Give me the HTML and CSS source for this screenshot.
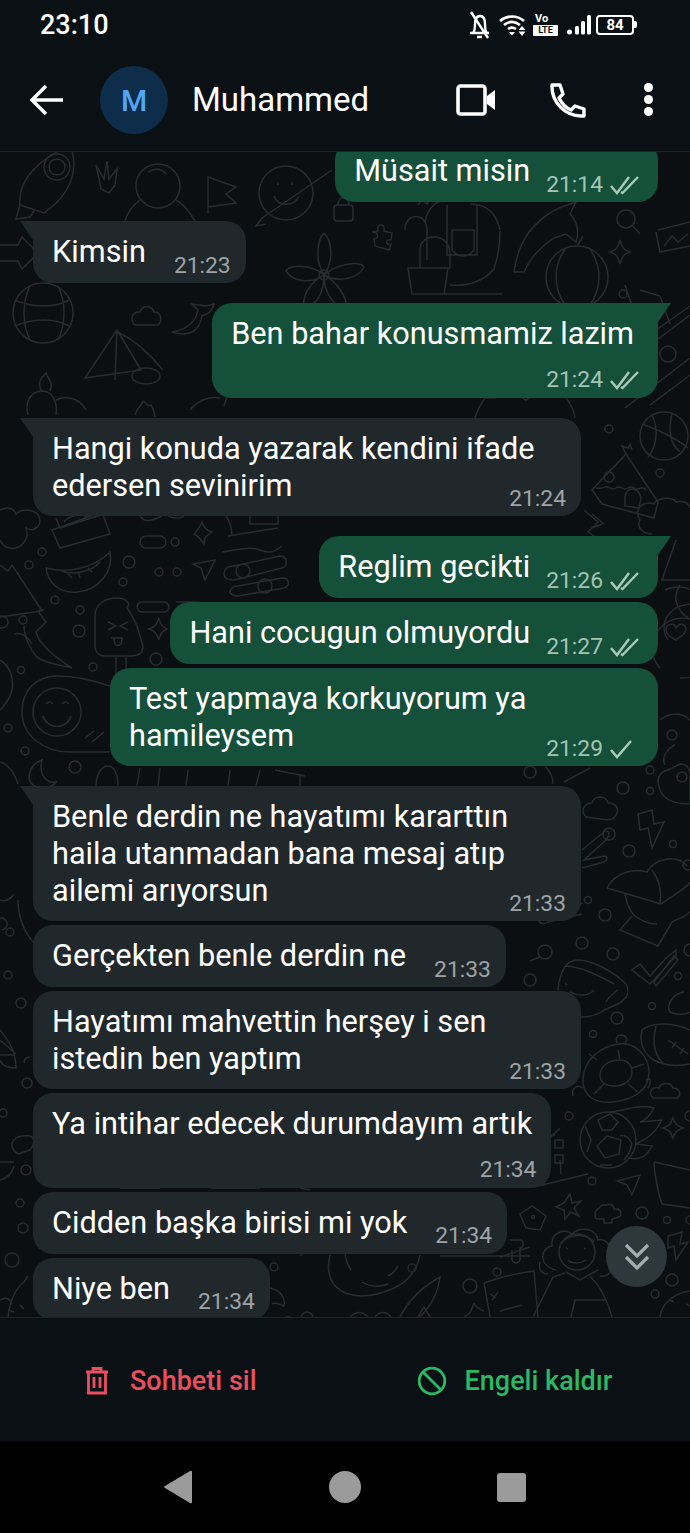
FILE: index.html
```html
<!DOCTYPE html>
<html lang="tr">
<head>
  <meta charset="UTF-8">
  <meta name="viewport" content="width=device-width, initial-scale=1.0">
  <title>Muhammed</title>
  <link rel="stylesheet" href="styles.css">
</head>
<body>
<div class="statusbar">
  <span class="clock">23:10</span>
  <div class="status-icons">
    <svg width="24" height="28" viewBox="0 0 24 28" fill="none" stroke="#fff" stroke-width="2.400"><path d="M2 22h19M5 22c2-2 2-5 2-9 0-5 2-8 5-8s5 3 5 8c0 4 0 7 2 9M9 26h5M3 1l17 26"/></svg>
    <svg width="27" height="22" viewBox="0 0 27 22" fill="none" stroke="#fff" stroke-width="2.600"><path d="M1 7c7-6 17-6 24 0M5 11c5-4 11-4 16 0M9 15c3-2 5-2 8 0"/><path d="M10 18h6l-3 3.500z" fill="#fff" stroke="none"/><path d="M23 12l3.500 4h-7zM23 22l3.500-4.500h-7z" fill="#fff" stroke="none"/></svg>
    <div class="volte"><span class="vo">Vo</span><span class="lte">LTE</span></div>
    <svg class="signal" width="24" height="20" viewBox="0 0 24 20" fill="#fff"><circle cx="2.500" cy="17" r="2.500"/><rect x="8" y="11" width="4" height="8.500" rx="1.500"/><rect x="14" y="6" width="4" height="13.500" rx="1.500"/><rect x="20" y="0" width="4" height="19.500" rx="1.500"/></svg>
    <div class="battery"><span class="battery-body">84</span><span class="battery-tip"></span></div>
  </div>
</div>

<div class="topbar">
  <svg class="back" width="34" height="32" viewBox="0 0 34 32" fill="none" stroke="#fff" stroke-width="3.400"><path d="M33 16H3M16 2L2 16l14 14"/></svg>
  <div class="avatar">M</div>
  <div class="name">Muhammed</div>
  <svg class="video" width="40" height="32" viewBox="0 0 40 32" fill="none"><rect x="2" y="2" width="27" height="28" rx="2.500" stroke="#fff" stroke-width="3.600"/><path d="M31 12l8-6v20l-8-6z" fill="#fff"/></svg>
  <svg class="call" width="36" height="36" viewBox="0 0 36 36" fill="none" stroke="#fff" stroke-width="3.400" stroke-linejoin="round"><path d="M2 3h8l3 9-4 4c3 6 7 10 12 12l4-4 9 3v7h-3C15 34 2 20 2 5z"/></svg>
  <div class="dots"><i></i><i></i><i></i></div>
</div>

<div class="chat">
  <svg class="wallpaper" width="690" height="1165" viewBox="0 152 690 1165" fill="none" stroke="#272c2f" stroke-width="1.500">
    <!-- doodles, in page coordinates -->
    <!-- rocket, hand, astronaut, flag, planet -->
    <path d="M20 205c-2-22 12-42 50-60 10 26 0 50-26 68zM20 205l-4 14 14-2 4-6"/><circle cx="57" cy="167" r="13"/><circle cx="57" cy="167" r="8"/>
    <path d="M96 165l8 14 3-18 2 18 8-10-2 16-6 8-8-4z"/>
    <circle cx="158" cy="186" r="22"/><path d="M140 200c-14 10-22 30-14 52M176 200c14 8 20 24 24 30M148 172c6-4 14-4 18 2"/>
    <path d="M208 213v-36l28 10-10 7 10 9-28 4"/>
    <circle cx="286" cy="193" r="27"/><path d="M274 196c4 11 20 11 25 0M278 182v3M292 182v3M262 218l70-48M262 218l-6 8 10-2"/>
    <rect x="334" y="205" width="19" height="16" rx="3"/><path d="M338 205c0-10 11-10 11 0"/>
    <path d="M372 232l6-1c-2-8 8-8 6 0l8 2-1 7c-6-2-6 6 0 4l-2 6-14-4-1-7c5 0 5-7-2-7z"/>
    <!-- flower -->
    <path d="M324 275c-14-12-36-10-38-4 6 10 24 14 38 4zM324 275c14-12 36-14 40-8-6 12-26 16-40 8zM324 275c-10-16-6-36 0-42 8 8 10 28 0 42zM324 275c-14 6-22 22-20 32 12 0 20-14 20-32zM324 275c12 6 24 22 22 34-12-2-22-16-22-34z"/><circle cx="324" cy="275" r="5"/>
    <!-- cactus and overalls -->
    <path d="M405 230c0-18 22-18 22 0v30M447 200c-10 0-20 8-22 22M447 205v50h30V205M452 250c6 8 16 8 22 0v-20h-22zM500 230c-4-18-14-26-30-26M420 250c0-18 30-18 30 4v14h-30zM408 268h40l-4 26h-32zM412 294h90M450 285c20 2 36-6 44-16 4-12 6-26 6-38"/>
    <path d="M418 205l4-6 5 5 3-5"/>
    <!-- dolphin, ball, magnifier, star -->
    <path d="M514 272c4-30 20-54 50-66l12-4-6 12c6 6 10 16 6 28l-10-8-12 4c-12 8-24 20-30 34l-10 0z"/>
    <circle cx="577" cy="277" r="31"/><path d="M565 249c-12 18-12 38 0 56M590 249c12 18 12 38 0 56M577 246l6-10"/>
    <circle cx="626" cy="219" r="9"/><path d="M633 226l7 8"/>
    <path d="M620 240c2 8 4 10 10 12-6 2-8 4-10 12-2-8-4-10-10-12 6-2 8-4 10-12z"/>
    <path d="M658 230l32-8M656 232l4 20 30-6M664 246l8-10 6 6 10-8"/>
    <path d="M0 245l18 0 4-8 16 16-16 16-4-8H0"/>
    <!-- globe, cloud, whale, megaphone, candle -->
    <circle cx="43" cy="313" r="30"/><path d="M15 300c18 8 40 8 54 0M15 326c18-8 40-8 54 0M30 286c-8 16-8 38 0 54M58 286c8 16 8 38 0 54"/>
    <path d="M135 325c-6-6-2-14 5-13 2-7 12-7 14 0 7 0 9 8 4 13z"/>
    <path d="M172 332c14-2 24-10 26-22l-6-6 14 2 8-2c-2 8-6 10-12 12-2 14-12 22-30 16z"/>
    <path d="M85 378l32-48 24 40zM117 330l-2 50M118 332c16 8 32 22 45 38"/><ellipse cx="146" cy="376" rx="14" ry="8"/>
    <path d="M28 415c-4-14 4-24 14-24s16 10 14 24M42 391c-6-8 0-14 4-18 2 6 8 10 4 18M56 400c8-4 22-4 30 10"/>
    <path d="M135 415c2-8 6-8 8-14 4 2 4 6 8 4 2 4 4 6 4 12"/>
    <path d="M218 356c10 8 14 30 6 50M190 410c8-10 20-14 30-12"/>
    <!-- party hat, jug, stripes -->
    <path d="M475 418c4-14 14-28 30-36l50 6c12 8 18 18 20 30M486 398h10M520 396l6 4 6-4"/>
    <path d="M650 405l40-30M625 408l65-50M650 345l40-30M656 330l34-24"/>
    <circle cx="668" cy="354" r="8"/>
    <path d="M640 290l20 6 10 28M625 285l6 18"/>
    <circle cx="623" cy="294" r="4"/>
    <!-- basketball, hut, cloud -->
    <circle cx="664" cy="436" r="24"/><path d="M642 424c12 4 34 14 46 24M652 415c6 12 6 30-4 42M672 414c-4 14-2 30 8 38"/>
    <path d="M592 490l34-36 32 48-4 16-52-14zM626 454l-4-8 6 2 2-4 2 6M596 488c8 2 8-4 14 0s6-4 12 0 6-4 12 0 6-4 12 2"/><circle cx="609" cy="477" r="5"/>
    <path d="M625 498c0-12 14-12 16 0l-2 10-14-2z"/>
    <circle cx="609" cy="429" r="4"/><circle cx="660" cy="473" r="4"/>
    <path d="M640 520c-8-12 6-20 14-16 2-6 18-8 22-2 8-2 14 2 14 6M640 520c-4 8 4 14 12 14"/>
    <path d="M584 510l14 12-10 10 12 8M602 524l-10 4M592 514l12 10"/>
    <!-- left of the green bubbles -->
    <path d="M52 530l50-18 8 22-50 14zM56 518l4 10 44-14M64 522c4-6 18-10 24-4"/>
    <path d="M140 542a6 6 0 0 1 6-6h14a6 6 0 0 1 0 12h-14a6 6 0 0 1-6-6z"/><circle cx="175" cy="542" r="4"/>
    <path d="M202 522c2 6 4 8 10 10-6 4-8 6-8 12-4-6-6-8-10-10 4-4 6-6 8-12z"/>
    <path d="M140 516c4 6 10 6 22 0M168 516c10 4 12 2 16 0"/>
    <path d="M226 516c4 6 6 12 6 20M276 504v8M250 512h28v12h-28zM228 536l50-8M222 552c14-2 28-6 38-2s14 2 22-4"/>
    <path d="M46 568c22 6 48 0 64-16 4 20-12 38-32 40s-30-10-32-24zM60 570c10 6 32 2 40-8"/>
    <path d="M68 574l4 4M78 572l2 6M88 568l4 4"/>
    <circle cx="129" cy="562" r="6"/><circle cx="123" cy="582" r="4"/><circle cx="159" cy="572" r="4"/><circle cx="177" cy="572" r="4"/><circle cx="42" cy="552" r="4"/><circle cx="29" cy="565" r="4"/>
    <path d="M193 564l22-4-10 20-4-12z"/>
    <path d="M224 574c0-6 4-8 10-8l46-10c8 0 8 10 2 12l-48 12c-6 0-10-2-10-6z"/><circle cx="243" cy="571" r="7"/>
    <path d="M230 592c0-4 4-6 8-6l44-8c8 0 8 8 2 10l-46 8c-4 0-8-2-8-4z"/><circle cx="265" cy="586" r="7"/>
    <path d="M0 510c8-4 14-2 16 4 6-6 22-6 24 6 0 8-8 12-14 8 4 12-6 22-16 20-4 0-8-4-10-8"/>
    <path d="M0 565l8 6 4-6 4 6 26 40-42 6"/>
    <circle cx="55" cy="600" r="4"/><circle cx="80" cy="610" r="4"/><circle cx="23" cy="620" r="4"/><circle cx="2" cy="622" r="6"/>
    <path d="M142 602h22a5 5 0 0 1 0 10h-22a5 5 0 0 1 0-10zM176 602h22c4 0 6 4 4 8"/>
    <path d="M95 640v-24c0-12 10-18 22-18 6 0 10 2 12 6l-2 4 4 6 6 12 6 20c0 8-6 10-12 10H105c-6 0-10-4-10-10zM116 657v22M126 657v22"/>
    <path d="M108 622l8 4-8 4M128 622l-8 4 8 4M111 638h12M114 638c0 10 8 10 8 0"/>
    <path d="M159 618c1 6 3 9 8 11-5 2-7 5-8 11-2-6-4-9-10-11 6-2 8-5 10-11z"/>
    <circle cx="79" cy="631" r="6"/><circle cx="156" cy="659" r="6"/><circle cx="93" cy="667" r="4"/>
    <path d="M40 614l6 8-10 10c4 14 20 26 36 36-8-2-24-4-34-10-8-8-14-22-14-32M14 634c10-2 14 4 18 10M40 614c-2-2 0-6 4-4"/>
    <path d="M0 660c10 6 14 18 12 30-2 8-6 14-12 20"/><circle cx="21" cy="670" r="3.500"/>
    <!-- avocado and moon -->
    <path d="M22 712c0-22 14-36 36-36 20 0 40 6 52 10M110 752H70c-26 0-48-16-48-40"/>
    <circle cx="57" cy="712" r="24"/><path d="M43 716c4 14 24 14 28 0M46 704c2-3 5-3 7 0M62 704c2-3 5-3 7 0"/>
    <path d="M85 738l9-7M92 742l12-10"/>
    <circle cx="8" cy="728" r="4"/><circle cx="25" cy="751" r="4"/><circle cx="75" cy="767" r="6"/>
    <path d="M42 760c-12 4-16 18-10 24s20 4 24-2c-8 2-18-6-14-22z"/>
    <path d="M96 786c0-12 6-20 12-20s10 8 10 20"/>
    <path d="M0 762c8 2 14 10 18 22"/>
    <path d="M140 768l-3 18M160 768l-2 18M188 770l-2 16M230 770l-2 16M260 770l-4 16M300 774v12M275 770l30 6"/>
    <!-- right of the green bubbles -->
    <path d="M676 540l-14 40h28M680 585c-8 12-4 26 10 34"/>
    <path d="M665 590c8-4 20-4 25 0M668 640c-10-16 0-34 22-36"/>
    <path d="M660 668a30 30 0 1 1 20 10M676 628c4-6 10-4 10 2-2 6-8 8-10 10-4-2-10-6-10-10 0-6 8-8 10-2z"/>
    <path d="M660 720c10-8 22-8 30 0M675 745c-8 4-14 12-10 20"/>
    <circle cx="672" cy="735" r="5"/><circle cx="530" cy="772" r="6"/><circle cx="650" cy="770" r="4"/>
    <path d="M545 766c6 6 8 12 8 18M590 768l-26 14"/>
    <!-- cloud, bolt, lock -->
    <path d="M586 817c-6-6-2-14 6-14 2-8 14-8 16 0 8 0 12 6 8 12-2 4-6 5-8 5z"/>
    <path d="M638 814l14-4 2 14 10-2-12 26-4-20-8 2z"/>
    <path d="M660 790c-4-10-2-18 8-20l12-6c8 0 10 6 10 10v30c-14 0-26-4-30-14z"/><circle cx="682" cy="777" r="5"/>
    <circle cx="623" cy="788" r="6"/><circle cx="650" cy="791" r="3.500"/><circle cx="609" cy="834" r="6"/><circle cx="629" cy="851" r="6"/><circle cx="673" cy="844" r="3.500"/><circle cx="688" cy="865" r="5"/><circle cx="588" cy="900" r="3.500"/><circle cx="605" cy="915" r="6"/><circle cx="582" cy="943" r="6"/><circle cx="613" cy="954" r="6"/><circle cx="530" cy="980" r="6"/><circle cx="617" cy="1018" r="6"/><circle cx="593" cy="1034" r="3.500"/><circle cx="652" cy="1006" r="3.500"/><circle cx="678" cy="976" r="3.500"/><circle cx="690" cy="950" r="6"/>
    <path d="M582 850l22-18c6-4 6 4 2 8l-22 20 20-4c4 0 4 4 0 6l-22 6"/>
    <path d="M607 888c8-16 28-20 40-16 8-14 30-18 40-6M607 888l54 16M652 870c6 8 10 20 8 34M661 904c20-14 28-18 29-22M625 894c2 10 4 16 10 22 8 6 16 8 22 8M632 916l-12 14 38 16 14-24c8-4 14-6 18-10"/>
    <path d="M582 903c-14 14-28 4-36 0M582 914l-34 8c-6 4-10 0-10-4"/>
    <!-- cup, ticks, moon, football, lifebuoy -->
    <circle cx="545" cy="952" r="7"/><path d="M540 957l-10 4"/>
    <path d="M558 990c2-20 8-30 20-30 14 0 36 12 48 24 4 8 2 14-8 20l-14 6c-10 8-26 8-36 6-6-6-8-16-10-26zM566 966c14 0 38 12 48 18M618 990c-6 4-10 8-12 12M565 983l2 2M592 990l2 2M570 992c8 4 16 4 22 0"/>
    <path d="M632 970l8-6 10 12 16-18 10-8 0 6-26 28zM654 982l20-26 4 4-22 26z"/>
    <path d="M684 992c-12 2-18 14-14 20 4 2 14 4 20 0"/>
    <path d="M642 1030c10-8 30-8 48 0M642 1030c-4 14 4 28 16 32 10 4 22 4 32 2M656 1026c-4 14-2 30 8 38"/>
    <path d="M668 1040l20 14M672 1048l4-6M680 1054l4-6"/>
    <path d="M583 1080c0-20 18-34 36-36s30 14 30 28c0 20-18 28-36 30s-30-6-30-22zM600 1076c0-10 8-16 20-16 8 0 12 6 12 12 0 10-10 14-18 14s-14-4-14-10z"/>
    <path d="M597 1060l-8-6M620 1060l-2-10M632 1068l12-4M628 1084l10 8M604 1084l-10 10M617 1043c-2-4 0-8 4-8s8 4 4 8"/>
    <path d="M573 1096c-2-8 4-12 10-8M648 1088c4-6 2-12-2-8"/>
    <!-- ball, pot, woman -->
    <circle cx="608" cy="1140" r="28"/><path d="M598 1120l12-6 8 8-6 8h-10zM607 1136l14 4-2 14-14 4-8-12zM585 1126l6 14-4 12M620 1136c6-2 10 4 12 8-2 8-4 12-8 16M600 1165l12 0"/>
    <path d="M610 1112c16-2 32-8 44-4-4 8-8 12-14 14l22-2c-6 12-16 20-26 24l16 2c-6 12-14 14-24 12"/>
    <path d="M673 1118c2 6 4 8 10 10-6 2-8 4-10 10-2-6-4-8-10-10 6-2 8-4 10-10z"/>
    <path d="M653 1098c-6-6 0-12 6-10 2-6 12-6 14 0 8 0 8 8 4 10z"/>
    <circle cx="569" cy="1116" r="4"/><circle cx="592" cy="1181" r="4"/><circle cx="690" cy="1116" r="5"/>
    <path d="M617 1181l23-6-8 20-5-10z"/>
    <path d="M654 1162l36 8M654 1162c0 8 4 32 8 42l28 4"/>
    <path d="M570 1194l2 9 9-2-7 7 5 8-8-4-6 7-1-9-8-3 8-4z"/>
    <path d="M602 1205h4c4-2 8 0 8 4l4 0c4 2 4 8 0 8l-6 2v4h-8v-4l-6 0c-4 0-4-8 0-10z"/>
    <circle cx="642" cy="1213" r="6"/><circle cx="667" cy="1220" r="3.500"/><circle cx="690" cy="1220" r="4"/>
    <path d="M520 1214l12-8 14 10-6 14-14-2z"/><circle cx="533" cy="1217" r="1.500"/>
    <path d="M668 1236l14-4-2 12 8-2-12 18-2-14-6 2z"/>
    <circle cx="672" cy="1280" r="6"/><circle cx="655" cy="1294" r="4"/><circle cx="497" cy="1272" r="4"/>
    <path d="M510 1240h10c4 0 4 8 0 8v12c-2 4-6 4-8 0v-10"/>
    <path d="M556 1270c-18-4-16-22-4-24-2-14 14-18 20-12 8-8 24-6 26 6 6-2 14 4 12 12M610 1258c6 8 0 20-10 18M540 1262c-2 8 2 12 8 12"/>
    <circle cx="577" cy="1252" r="18"/><path d="M566 1248l2 1M584 1248l2 1M568 1260c4 4 12 4 18 0M560 1244c8-10 26-12 34-2"/>
    <path d="M566 1272l14 8 18-10M533 1317l20-40 12-4M590 1276c10 10 18 26 22 41M605 1300h-30l-4 17"/>
    <path d="M484 1283c16-6 34-10 50-12l4 46M490 1294l6 4M498 1292l-6 8M500 1311l22-6M484 1283l6 34"/>
    <path d="M660 1317c2-14 14-24 30-26M670 1300l4 2M686 1304l4 2"/>
    <!-- bottom row -->
    <path d="M400 1317c8-16 22-30 40-40-2 16-10 30-20 40M418 1317l6-10 6 10"/>
    <path d="M464 1317l6-4c2-6 4-8 4-10 2 4 4 6 10 8"/>
    <circle cx="470" cy="1286" r="7"/><circle cx="412" cy="1268" r="4"/><circle cx="274" cy="1267" r="4"/><circle cx="307" cy="1318" r="6"/><circle cx="288" cy="1320" r="3.500"/>
    <path d="M350 1317c6-6 12-6 18 0M375 1317c4-6 12-6 16 0"/>
    <path d="M270 1288c10 2 16 10 14 18-4-2-8-4-12-2M330 1255c-10 40 30 52 70 30 12-8 18-20 20-30M345 1250c0 6 2 14 6 20M362 1282c6 4 16 6 26 2M388 1276c4-2 8-6 10-10"/>
    <path d="M350 1253h70"/>
    <!-- left edge -->
    <circle cx="12" cy="1260" r="7"/>
    <path d="M0 1300c8-4 10 0 12 4M28 1276l-4 6c-8 6-14 18-16 35M20 1305l4 4M8 1310l6 2"/>
    <path d="M0 900c6 2 10 0 14-6M18 900c0 22 10 40 24 50l6 4M0 918a6 6 0 1 1 2 12"/>
    <circle cx="10" cy="932" r="4"/><circle cx="8" cy="975" r="4"/><circle cx="21" cy="1003" r="5"/><circle cx="27" cy="1083" r="5"/><circle cx="20" cy="1203" r="4"/><circle cx="23" cy="1228" r="5"/><circle cx="3" cy="1113" r="4"/><circle cx="26" cy="1170" r="5"/>
    <path d="M0 1030c8 10 16 20 16 38-8 0-14-2-16-8M0 1055l14 0M0 1040l16 14"/>
    <path d="M14 1140c6-6 12-4 16-4 6 2 4 10 0 14l-12 4c-6-4-8-10-4-14z"/>
    <path d="M0 1162h14M14 1166c-2 8-6 12-14 14"/>
    <path d="M24 1063c0-4 2-6 6-6"/>
    <!-- strips between the grey bubbles -->
    <path d="M120 1188h40M210 1188h50M300 1188l10 2M560 1128l-14 14M555 1135h-12M520 1186l-4-26M480 1187h-120"/>
    <path d="M545 1158l-1 28M538 1186l50-12M560 1160l1 14"/>
    <rect x="555" y="1140" width="8" height="8"/><rect x="555" y="1155" width="8" height="8"/>
    <path d="M500 1257l30-10M300 1256l4-4M440 1256h90"/>
  </svg>

  <div class="thread">
    <div class="bubble sent inline first">
      <span class="text">Müsait misin</span>
      <span class="meta">21:14 <svg class="ticks" width="30" height="20" viewBox="0 0 30 20"><path d="M1 11l6 7L19 2M11 17l1.500 1L28 2"/></svg></span>
    </div>

    <div class="bubble received inline tail near">
      <span class="text">Kimsin</span>
      <span class="meta">21:23</span>
    </div>

    <div class="bubble sent stack single tail roomy">
      <span class="text">Ben bahar konusmamiz lazim</span>
      <span class="meta">21:24 <svg class="ticks" width="30" height="20" viewBox="0 0 30 20"><path d="M1 11l6 7L19 2M11 17l1.500 1L28 2"/></svg></span>
    </div>

    <div class="bubble received stack tail wide">
      <span class="text">Hangi konuda yazarak kendini ifade<br>edersen sevinirim</span>
      <span class="meta">21:24</span>
    </div>

    <div class="bubble sent inline tail">
      <span class="text">Reglim gecikti</span>
      <span class="meta">21:26 <svg class="ticks" width="30" height="20" viewBox="0 0 30 20"><path d="M1 11l6 7L19 2M11 17l1.500 1L28 2"/></svg></span>
    </div>
    <div class="bubble sent inline next">
      <span class="text">Hani cocugun olmuyordu</span>
      <span class="meta">21:27 <svg class="ticks" width="30" height="20" viewBox="0 0 30 20"><path d="M1 11l6 7L19 2M11 17l1.500 1L28 2"/></svg></span>
    </div>
    <div class="bubble sent stack next wide">
      <span class="text">Test yapmaya korkuyorum ya<br>hamileysem</span>
      <span class="meta">21:29 <svg class="ticks" width="30" height="20" viewBox="0 0 30 20"><path d="M1 11l6 7L21 2"/></svg></span>
    </div>

    <div class="bubble received stack tail wide">
      <span class="text">Benle derdin ne hayatımı kararttın<br>haila utanmadan bana mesaj atıp<br>ailemi arıyorsun</span>
      <span class="meta">21:33</span>
    </div>
    <div class="bubble received inline next">
      <span class="text">Gerçekten benle derdin ne</span>
      <span class="meta">21:33</span>
    </div>
    <div class="bubble received stack next wide">
      <span class="text">Hayatımı mahvettin herşey i sen<br>istedin ben yaptım</span>
      <span class="meta">21:33</span>
    </div>
    <div class="bubble received stack single next">
      <span class="text">Ya intihar edecek durumdayım artık</span>
      <span class="meta">21:34</span>
    </div>
    <div class="bubble received inline next">
      <span class="text">Cidden başka birisi mi yok</span>
      <span class="meta">21:34</span>
    </div>
    <div class="bubble received inline next">
      <span class="text">Niye ben</span>
      <span class="meta">21:34</span>
    </div>
  </div>

  <div class="scroll-down">
    <svg width="26" height="28" viewBox="0 0 26 28" fill="none" stroke="#a3acb1" stroke-width="3.200"><path d="M2 2l11 11L24 2M2 14l11 11 11-11"/></svg>
  </div>
</div>

<div class="actions">
  <div class="action delete">
    <svg width="24" height="28" viewBox="0 0 24 28" fill="none" stroke="#ea4f60" stroke-width="2.800"><path d="M1 5h22M8 4V1.500h8V4M3.500 5v21h17V5M9 10v11M15 10v11"/></svg>
    <span>Sohbeti sil</span>
  </div>
  <div class="action unblock">
    <svg width="30" height="30" viewBox="0 0 30 30" fill="none" stroke="#2bb765" stroke-width="2.800"><circle cx="15" cy="15" r="12.800"/><path d="M6 6l18 18"/></svg>
    <span>Engeli kaldır</span>
  </div>
</div>

<div class="navkeys">
  <svg width="30" height="34" viewBox="0 0 30 34" fill="#9b9b9b"><path d="M29 2v30q0 2-2 1L2 18q-2-1 0-2L27 1q2-1 2 1z"/></svg>
  <div class="nav-home"></div>
  <div class="nav-recent"></div>
</div>
</body>
</html>
```

FILE: styles.css
```css
* {
  margin: 0;
  padding: 0;
  box-sizing: border-box;
  font-family: Roboto, "Liberation Sans", sans-serif;
}
html, body {
  width: 690px;
  height: 1533px;
  overflow: hidden;
  background-color: #000;
}
body {
  display: flex;
  flex-direction: column;
  color: #fff;
}
.statusbar {
  height: 50px;
  flex: none;
  display: flex;
  justify-content: space-between;
  align-items: center;
  padding: 0 53px 1px 40px;
  background-color: #0b1014;
}
.clock {
  font-size: 27px;
  font-weight: 500;
}
.status-icons {
  display: flex;
  align-items: center;
  gap: 7px;
}
.volte {
  display: flex;
  flex-direction: column;
  align-items: flex-start;
  width: 25px;
  font-family: "Liberation Sans", sans-serif;
  font-weight: bold;
}
.vo {
  font-size: 11px;
  line-height: 12px;
  padding-left: 2px;
}
.lte {
  font-size: 9px;
  line-height: 11px;
  width: 25px;
  text-align: center;
  background-color: #fff;
  color: #0b1014;
  border-radius: 1px;
}
.signal {
  margin-left: 2px;
}
.battery {
  display: flex;
  align-items: center;
  margin-left: -2px;
}
.battery-body {
  width: 38px;
  height: 20px;
  border: 2px solid #fff;
  border-radius: 4px;
  font-size: 15px;
  line-height: 16px;
  font-weight: 700;
  text-align: center;
}
.battery-tip {
  width: 3px;
  height: 7px;
  background-color: #fff;
  border-radius: 0 2px 2px 0;
}
.topbar {
  height: 102px;
  flex: none;
  display: flex;
  align-items: center;
  padding: 0 0 2px 30px;
  background-color: #0b1014;
  border-bottom: 1px solid #1c2226;
}
.avatar {
  width: 68px;
  height: 68px;
  margin-left: 36px;
  border-radius: 50%;
  background-color: #0e2d4a;
  color: #53a6f4;
  font-size: 30px;
  font-weight: 500;
  line-height: 70px;
  text-align: center;
}
.name {
  margin-left: 24px;
  font-size: 33px;
  flex: 1;
}
.video {
  margin-right: 54px;
}
.call {
  margin-right: 58px;
}
.dots {
  width: 9px;
  margin-right: 37px;
  display: flex;
  flex-direction: column;
  gap: 3px;
}
.dots i {
  width: 9px;
  height: 9px;
  border-radius: 50%;
  background-color: #fff;
}
.chat {
  position: relative;
  height: 1165px;
  flex: none;
  overflow: hidden;
  background-color: #0b0f12;
}
.wallpaper {
  position: absolute;
  top: 0;
  left: 0;
}
.thread {
  position: relative;
  display: flex;
  flex-direction: column;
  padding: 0 32px 0 33px;
}
.bubble {
  position: relative;
  flex: none;
  border-radius: 20px;
  padding: 0 19px;
  font-size: 30.700px;
  line-height: 36.600px;
  margin-top: 20px;
}
.bubble.near {
  margin-top: 19px;
}
.bubble.next {
  margin-top: 4px;
}
.bubble.first {
  margin-top: -12px;
}
.sent {
  align-self: flex-end;
  background-color: #15503a;
}
.received {
  align-self: flex-start;
  background-color: #21282c;
}
.wide {
  width: 548px;
}
.roomy {
  padding-right: 24px;
}
.inline {
  height: 62px;
  display: flex;
  justify-content: space-between;
  gap: 16px;
  padding-top: 13px;
}
.received.inline {
  gap: 28px;
}
.stack {
  display: flex;
  flex-direction: column;
  padding-top: 13px;
  padding-bottom: 2px;
}
.meta {
  flex: none;
  display: flex;
  align-items: center;
  gap: 7px;
  font-size: 22.800px;
  height: 30px;
  margin-top: 17px;
  white-space: nowrap;
}
.stack .meta {
  align-self: flex-end;
  margin-top: -20px;
}
.stack.single .meta {
  margin-top: 12.500px;
}
.sent.single {
  padding-bottom: 3px;
}
.received .meta {
  color: #9da3a7;
  margin-right: -4px;
}
.sent .meta {
  color: #a3c4b4;
  margin-right: -1px;
}
.roomy .meta {
  margin-right: -6px;
}
.ticks {
  fill: none;
  stroke: #a9c9b9;
  stroke-width: 2.500;
}
.received.tail {
  border-top-left-radius: 0;
}
.sent.tail {
  border-top-right-radius: 0;
}
.tail::before {
  content: "";
  position: absolute;
  top: 0;
  width: 0;
  height: 0;
}
.received.tail::before {
  left: -13px;
  border-top: 19px solid #21282c;
  border-left: 13px solid transparent;
}
.sent.tail::before {
  right: -13px;
  border-top: 19px solid #15503a;
  border-right: 13px solid transparent;
}
.scroll-down {
  position: absolute;
  top: 1074px;
  left: 606px;
  width: 61px;
  height: 61px;
  border-radius: 50%;
  background-color: #2d373c;
  display: flex;
  align-items: center;
  justify-content: center;
}
.actions {
  height: 124px;
  flex: none;
  display: flex;
  align-items: center;
  background-color: #0b1014;
  border-top: 1px solid #1c2226;
  padding-top: 2px;
}
.action {
  display: flex;
  align-items: center;
  font-size: 27px;
  font-weight: 500;
}
.delete {
  margin-left: 85px;
  gap: 21px;
  color: #ea4f60;
}
.unblock {
  margin-left: 160px;
  gap: 18px;
  color: #2bb765;
}
.navkeys {
  height: 92px;
  flex: none;
  display: flex;
  align-items: center;
  background-color: #000;
  padding: 0 0 0 163px;
}
.nav-home {
  width: 32px;
  height: 32px;
  margin-left: 136px;
  border-radius: 50%;
  background-color: #9b9b9b;
}
.nav-recent {
  width: 29px;
  height: 29px;
  margin-left: 136px;
  border-radius: 3px;
  background-color: #9b9b9b;
}
```
